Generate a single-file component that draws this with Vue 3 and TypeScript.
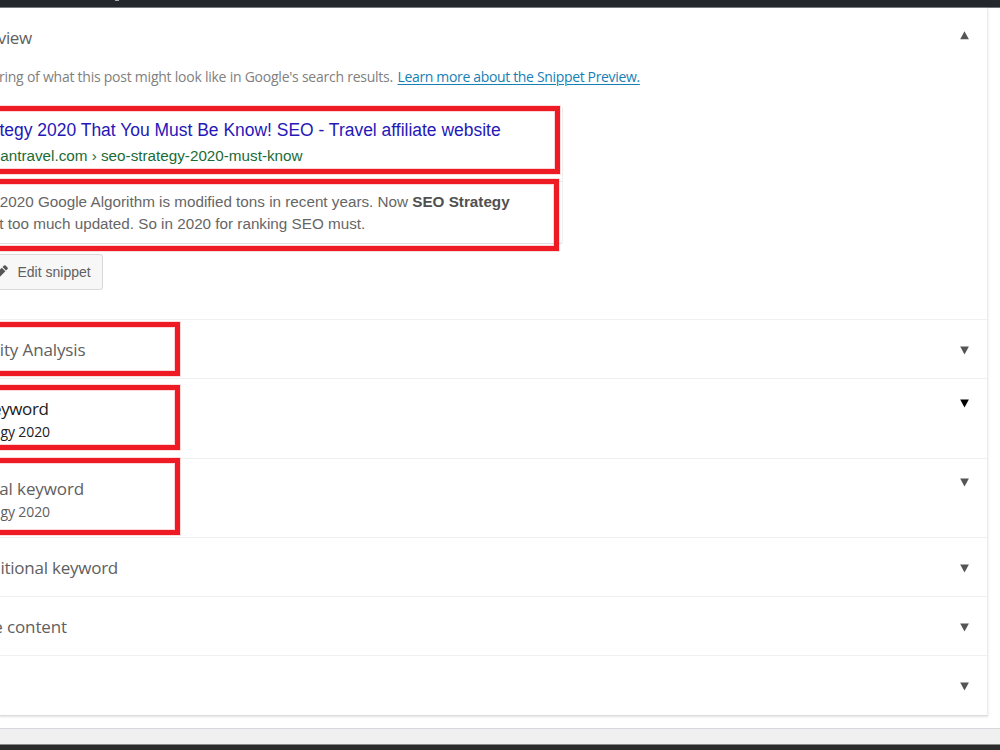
<script setup lang="ts">
interface Section {
  id: string
  title: string
  keyword?: string
  dark?: boolean
}

const sections: Section[] = [
  { id: 'analysis', title: 'ity Analysis' },
  { id: 'focus', title: 'eyword', keyword: 'gy 2020', dark: true },
  { id: 'additional', title: 'al keyword', keyword: 'gy 2020' },
  { id: 'add', title: 'itional keyword' },
  { id: 'content', title: 'e content' },
  { id: 'last', title: '' },
]
const marks: string[] = ['title', 'description', 'analysis', 'focus', 'additional']
</script>

<template>
  <div class="page">
    <div class="topbar"><i class="tail"></i></div>
    <main class="panel">
      <section class="preview">
        <header class="preview-head">
          <h2 class="line w-view"><span>view</span></h2>
          <svg class="arrow up" viewBox="0 0 10 9"><path d="M4.5 .3 8.9 8.3H.2Z" /></svg>
        </header>
        <div class="intro">
          <p class="line w-intro"><span>ring of what this post might look like in Google's search results.</span></p>
          <a class="link">Learn more about the Snippet Preview.</a>
        </div>
        <div class="snippet">
          <div class="snippet-top">
            <div class="line w-title"><span>tegy 2020 That You Must Be Know! SEO - Travel affiliate website</span></div>
            <div class="line w-url"><span>antravel.com › seo-strategy-2020-must-know</span></div>
          </div>
          <div class="snippet-desc">
            <div class="line w-d1"><span>2020 Google Algorithm is modified tons in recent years. Now <b>SEO Strategy</b></span></div>
            <div class="line w-d2"><span>t too much updated. So in 2020 for ranking SEO must.</span></div>
          </div>
        </div>
        <button class="edit">
          <svg class="pencil" viewBox="0 0 14 14">
            <path d="M0 14 1.2 9 7.3 2.9 11.2 6.8 5.1 12.9ZM8.1 2.1 9.7 .5Q10.6-.2 11.4.5L13.5 2.6Q14.2 3.4 13.5 4.3L11.9 5.9Z" />
          </svg>
          <span>Edit snippet</span>
        </button>
      </section>
      <section v-for="s in sections" :key="s.id" class="row" :class="[s.id, { dark: s.dark, tall: s.keyword }]">
        <div class="labels">
          <h3 class="line"><span>{{ s.title }}</span></h3>
          <p v-if="s.keyword" class="line"><span>{{ s.keyword }}</span></p>
        </div>
        <svg class="arrow" viewBox="0 0 10 9"><path d="M.2.6H8.9L4.5 8.6Z" /></svg>
      </section>
    </main>
    <footer class="footer"></footer>
    <div class="bottom"></div>
    <div v-for="m in marks" :key="m" class="mark" :class="'mark-' + m"></div>
  </div>
</template>

<style>
body { margin: 0; overflow: hidden; }
</style>

<style scoped>
* { box-sizing: border-box; }
.page { position: relative; width: 1000px; height: 750px; overflow: hidden; background: #fff; color: #606060; font-family: "Open Sans", "Noto Sans", sans-serif; display: flex; flex-direction: column; }
h2, h3, p { margin: 0; font-weight: 400; }
.topbar { flex: none; height: 8px; background: #23282d; border-bottom: 1px solid #707376; padding-left: 115px; }
.tail { display: block; width: 4px; height: 1px; background: #aaa; }
.panel { flex: none; width: 988px; height: 708px; border-right: 1px solid #ececec; border-bottom: 1px solid #dcdcdc; box-shadow: 0 1px 2px #e2e2e2; }
.line { display: flex; justify-content: flex-end; white-space: pre; }
.line span { flex: none; transform-origin: right center; }
.preview { height: 312px; border-bottom: 1px solid #f0f0f0; }
.preview-head { display: flex; justify-content: space-between; height: 58px; padding: 18px 17px 0 0; }
.preview-head h2 { width: 32px; font-size: 17px; line-height: 24px; letter-spacing: -0.3px; }
.arrow { flex: none; width: 10px; height: 9px; fill: #555; }
.arrow.up { margin-top: 5px; }
.intro { display: flex; height: 41px; font-size: 14px; line-height: 22px; color: #808080; white-space: nowrap; }
.w-intro { width: 393px; letter-spacing: -0.24px; }
.link { margin-left: 4.5px; color: #1680b5; text-decoration: underline; text-underline-offset: 2px; text-decoration-thickness: 1px; letter-spacing: -0.34px; }
.snippet { width: 563px; height: 137px; border-right: 1px solid #eee; border-bottom: 1px solid #ddd; border-radius: 0 0 3px 0; font-family: "Liberation Sans", Arial, sans-serif; }
.snippet-top { height: 75px; border-bottom: 1px solid #e6e6e6; padding-top: 12px; }
.w-title { width: 500.5px; font-size: 18px; line-height: 22px; color: #2518b8; }
.w-title span { transform: scaleX(.97); }
.w-url { width: 303px; margin-top: 5px; font-size: 15.5px; line-height: 20px; color: #1b6b36; }
.w-url span { transform: scaleX(.983); }
.snippet-desc { padding-top: 9px; font-size: 15.5px; line-height: 22px; color: #666; }
.snippet-desc span { transform: scaleX(.983); }
.w-d1 { width: 510px; }
.w-d2 { width: 365.5px; }
.w-d1 b { color: #505050; }
.edit { display: flex; align-items: center; width: 103px; height: 36px; margin: 10px 0 0; padding: 0; border: 1px solid #dadada; border-left: 0; border-radius: 0 3px 3px 0; background: #f7f7f7; color: #606060; font: 14px/20px "Liberation Sans", Arial, sans-serif; white-space: nowrap; }
.pencil { flex: none; width: 13px; height: 13px; margin: 0 9.5px 2px -5px; fill: #555; }
.row { display: flex; justify-content: space-between; height: 59px; padding: 18px 17px 0 0; border-bottom: 1px solid #f0f0f0; }
.row h3 { font-size: 17px; line-height: 24px; letter-spacing: -0.12px; }
.row p { width: 50px; margin-top: 1px; font-size: 14px; line-height: 20px; letter-spacing: -.1px; }
.row .arrow { margin-top: 8px; }
.row.tall { height: 79px; }
.row.tall .arrow { margin-top: 2px; }
.row.dark { height: 80px; color: #202020; }
.row.dark .arrow { fill: #000; }
.row.additional .arrow { margin-top: 1px; }
.analysis h3 { width: 85.5px; }
.row.focus h3 { width: 48.5px; letter-spacing: -.4px; }
.additional h3 { width: 84px; }
.row.add h3 { width: 118px; letter-spacing: -.24px; }
.content h3 { width: 67px; }
.last { border-bottom: 0; }
.footer { height: 17px; margin-top: 12px; background: #f0f0f0; border-top: 1px solid #d5d8dc; border-bottom: 1px solid #888; flex: none; }
.bottom { flex: 1; background: #2b2b2b; }
.mark { position: absolute; left: -10px; border: 5px solid #ee1b24; box-shadow: 0 0 0 1px rgba(238, 27, 36, .15), inset 0 0 0 1px rgba(238, 27, 36, .18); }
.mark-title { top: 106px; width: 570px; height: 68px; }
.mark-description { top: 179px; width: 569px; height: 72px; }
.mark-analysis { top: 322px; width: 190px; height: 54px; }
.mark-focus { top: 385px; width: 190px; height: 65px; }
.mark-additional { top: 458px; width: 190px; height: 77px; }
</style>
